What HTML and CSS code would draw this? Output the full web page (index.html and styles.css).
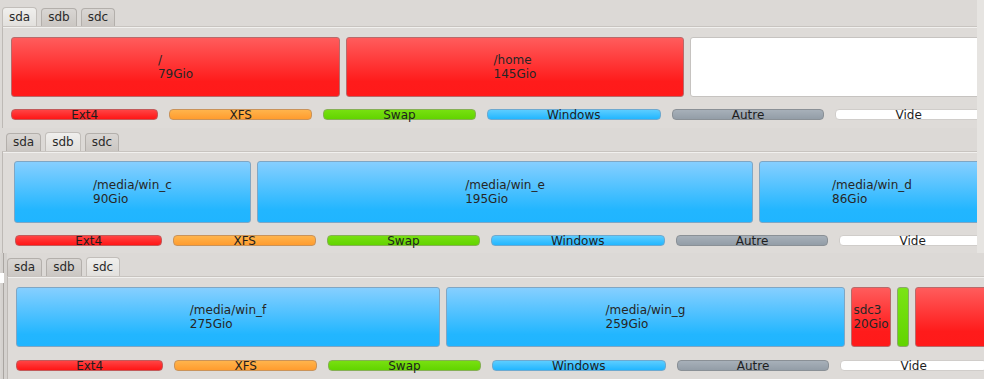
FILE: index.html
```html
<!DOCTYPE html>
<html lang="fr">
<head>
<meta charset="utf-8">
<title>Partitions</title>
<link rel="stylesheet" href="styles.css">
</head>
<body>
<div class="collage">
  <section class="shot shot1">
    <div class="win">
      <div class="tabs">
        <div class="tab sel">sda</div><div class="tab">sdb</div><div class="tab">sdc</div>
      </div>
      <div class="frame">
        <div class="parts">
          <div class="part red" style="width:329px"><div class="lbl"><span>/</span><span>79Gio</span></div></div>
          <div class="part red" style="width:338px"><div class="lbl"><span>/home</span><span>145Gio</span></div></div>
          <div class="part empty fill"></div>
        </div>
        <div class="legend">
          <div class="key k-ext4">Ext4</div>
          <div class="key k-xfs">XFS</div>
          <div class="key k-swap">Swap</div>
          <div class="key k-win">Windows</div>
          <div class="key k-autre">Autre</div>
          <div class="key k-vide">Vide</div>
        </div>
      </div>
    </div>
  </section>

  <section class="shot shot2">
    <div class="win">
      <div class="tabs">
        <div class="tab">sda</div><div class="tab sel">sdb</div><div class="tab">sdc</div>
      </div>
      <div class="frame">
        <div class="parts">
          <div class="part blue" style="width:237px"><div class="lbl"><span>/media/win_c</span><span>90Gio</span></div></div>
          <div class="part blue" style="width:496px"><div class="lbl"><span>/media/win_e</span><span>195Gio</span></div></div>
          <div class="part blue fill"><div class="lbl"><span>/media/win_d</span><span>86Gio</span></div></div>
        </div>
        <div class="legend">
          <div class="key k-ext4">Ext4</div>
          <div class="key k-xfs">XFS</div>
          <div class="key k-swap">Swap</div>
          <div class="key k-win">Windows</div>
          <div class="key k-autre">Autre</div>
          <div class="key k-vide">Vide</div>
        </div>
      </div>
    </div>
  </section>

  <section class="shot shot3">
    <div class="gutter"><div class="gutter-patch"></div></div>
    <div class="win">
      <div class="tabs">
        <div class="tab">sda</div><div class="tab">sdb</div><div class="tab sel">sdc</div>
      </div>
      <div class="frame">
        <div class="parts">
          <div class="part blue" style="width:424px"><div class="lbl"><span>/media/win_f</span><span>275Gio</span></div></div>
          <div class="part blue" style="width:399px"><div class="lbl"><span>/media/win_g</span><span>259Gio</span></div></div>
          <div class="part red" style="width:40px"><div class="lbl"><span>sdc3</span><span>20Gio</span></div></div>
          <div class="part green" style="width:12px"></div>
          <div class="part red" style="width:200px"></div>
        </div>
        <div class="legend">
          <div class="key k-ext4">Ext4</div>
          <div class="key k-xfs">XFS</div>
          <div class="key k-swap">Swap</div>
          <div class="key k-win">Windows</div>
          <div class="key k-autre">Autre</div>
          <div class="key k-vide">Vide</div>
        </div>
      </div>
    </div>
  </section>
</div>
</body>
</html>
```

FILE: styles.css
```css
html, body {
  margin: 0;
  padding: 0;
}
body {
  width: 984px;
  height: 379px;
  overflow: hidden;
  background: #e6e4e1;
  font-family: "DejaVu Sans", "Noto Sans", sans-serif;
  font-size: 12px;
  color: #252525;
}
.collage {
  display: flex;
  flex-direction: column;
}
.shot {
  display: flex;
  overflow: hidden;
  flex: none;
  background: #dcd9d6;
}
.shot1 { height: 128px; width: 977px; }
.shot2 { height: 125px; width: 977px; }
.shot3 { height: 126px; width: 984px; }

.win {
  flex: none;
  width: 990px;
  display: flex;
  flex-direction: column;
  background: #dcd9d6;
}
.shot1 .win { padding: 7px 0 0 2px; }
.shot2 .win { padding: 4px 0 0 2px; }
.shot3 .win { padding: 4px 0 0 0; }

.gutter {
  flex: none;
  width: 7px;
  box-sizing: border-box;
  border-left: 1px solid #d8d5d2;
  padding-left: 1px;
  background: linear-gradient(90deg, #d4d1ce 0, #d4d1ce 2px, #a9a5a1 2px, #a9a5a1 3px, #d4d1ce 3px);
}
.gutter-patch {
  margin-top: 20px;
  margin-left: -2px;
  width: 4px;
  height: 10px;
  background: #ffffff;
}

.tabs {
  display: flex;
  align-items: flex-end;
  gap: 4px;
  height: 19px;
}
.shot2 .tabs { padding-left: 4px; }
.tab {
  box-sizing: border-box;
  height: 18px;
  line-height: 17px;
  padding: 0 6px;
  border: 1px solid #b3afab;
  border-bottom: none;
  border-radius: 4px 4px 0 0;
  background: linear-gradient(#d9d6d3, #cbc7c3);
  color: #2a2a2a;
}
.tab.sel {
  height: 19px;
  line-height: 19px;
  background: linear-gradient(#f0efed, #e2e0dd);
  border-color: #c2beba;
}

.frame {
  flex: 1;
  border-top: 1px solid #c8c4c0;
  border-left: 1px solid #bdb9b5;
  box-shadow: inset 0 1px 0 #f1f0ee;
  background: #dedbd8;
  padding: 10px 0 0 8px;
}
.shot2 .frame { padding: 9px 0 0 11px; }
.shot3 .frame { padding: 10px 0 0 8px; }

.parts {
  display: flex;
  gap: 6px;
  height: 60px;
  width: 971px;
}
.shot2 .parts { height: 62px; }

.part {
  flex: none;
  box-sizing: border-box;
  border: 1px solid #a9a6a3;
  border-radius: 3px;
  display: flex;
  align-items: center;
  justify-content: center;
  overflow: hidden;
}
.part.fill { flex: 1 1 0; }
.lbl {
  display: flex;
  flex-direction: column;
  line-height: 14px;
  white-space: nowrap;
  color: #262626;
}
.red {
  background: linear-gradient(#ff5c5c, #ff1b1b 75%, #ff1a1a);
  border-color: #b86a6a;
}
.blue {
  background: linear-gradient(#86cfff, #22b6ff 80%, #20b5ff);
  border-color: #7fa6c4;
}
.green {
  background: linear-gradient(#7ae416, #62d400);
  border-color: #8aa86a;
}
.empty {
  background: #ffffff;
  border-color: #c6c3c0;
}

.legend {
  display: flex;
  gap: 11px;
  margin-top: 12px;
  width: 971px;
}
.shot2 .legend { margin-left: 1px; }
.shot3 .legend { margin-top: 13px; }
.key {
  flex: 1 1 auto;
  box-sizing: border-box;
  height: 11px;
  line-height: 10px;
  text-align: center;
  white-space: nowrap;
  border: 1px solid #999;
  border-radius: 4px;
  color: #1e1e1e;
}
.k-ext4 { background: linear-gradient(#ff4444, #ff1616); border-color: #c25a5a; }
.k-xfs { background: linear-gradient(#ffb44c, #ff9c2e); border-color: #c9935a; }
.k-swap { background: linear-gradient(#78e010, #62d400); border-color: #86b055; }
.k-win { background: linear-gradient(#5ccdff, #22b6ff); border-color: #6ea9cf; }
.k-autre { background: linear-gradient(#a7b0b9, #939da7); border-color: #8a9096; }
.k-vide { background: #ffffff; border-color: #d0cdca; }
```
